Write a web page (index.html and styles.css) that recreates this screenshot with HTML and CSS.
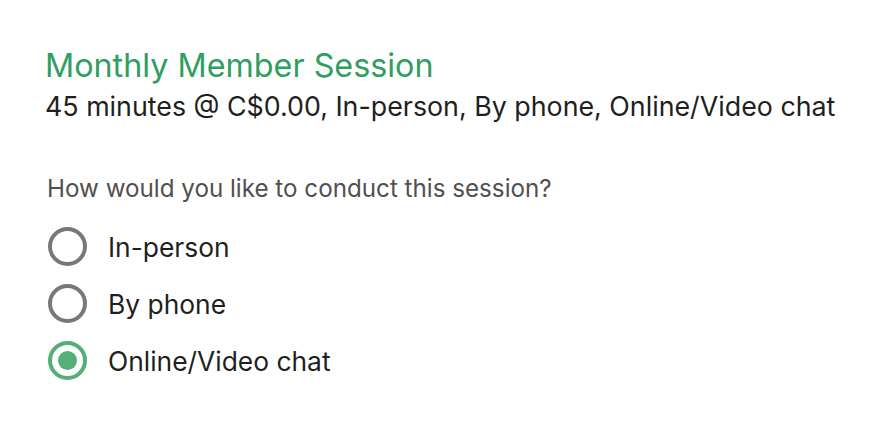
FILE: index.html
```html
<!DOCTYPE html>
<html>
<head>
<meta charset="utf-8">
<link rel="stylesheet" href="styles.css">
</head>
<body>
<div class="card">
  <h1 class="title">Monthly Member Session</h1>
  <p class="subtitle">45 minutes @ C$0.00, In-person, By phone, Online/Video chat</p>
  <fieldset class="group">
    <legend class="question">How would you like to conduct this session?</legend>
    <label class="option"><span class="radio"></span><span class="label">In-person</span></label>
    <label class="option"><span class="radio"></span><span class="label">By phone</span></label>
    <label class="option"><span class="radio checked"></span><span class="label">Online/Video chat</span></label>
  </fieldset>
</div>
</body>
</html>
```
FILE: styles.css
```css
html, body {
  margin: 0;
  padding: 0;
  background: #ffffff;
}
body {
  font-family: Inter, "Noto Sans", sans-serif;
  color: #1f1f1f;
}
.card {
  padding: 46px 45px 0 45px;
}
.title {
  margin: 0;
  font-size: 32.3px;
  font-weight: 400;
  line-height: 40px;
  color: #2f9e5f;
}
.subtitle {
  margin: 0;
  font-size: 26.8px;
  line-height: 40px;
  color: #1f1f1f;
}
.group {
  border: 0;
  margin: 48px 0 0 0;
  padding: 0;
}
.question {
  padding: 0 0 0 2px;
  font-size: 24.2px;
  line-height: 30px;
  color: #505050;
}
.option {
  display: flex;
  align-items: center;
  gap: 21px;
  height: 57px;
  padding-left: 3px;
}
.group .option:first-of-type {
  margin-top: 14px;
}
.radio {
  box-sizing: border-box;
  width: 39px;
  height: 39px;
  border-radius: 50%;
  border: 4px solid #787878;
  display: flex;
  align-items: center;
  justify-content: center;
  flex: none;
}
.radio.checked {
  border-color: #55af78;
}
.radio.checked::after {
  content: "";
  width: 19px;
  height: 19px;
  border-radius: 50%;
  background: #55af78;
}
.label {
  font-size: 26.4px;
  color: #1f1f1f;
}
```
